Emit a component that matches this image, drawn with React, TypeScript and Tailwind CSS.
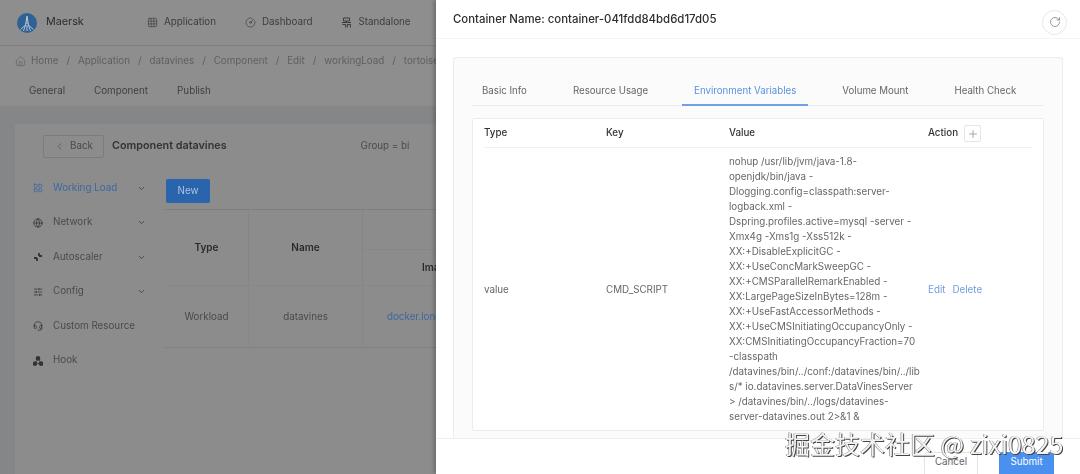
import { ChevronDown, ChevronLeft, CircleGauge, Globe, Grid3x3, Headset, House, LayoutGrid, Plus, RotateCw, SlidersHorizontal } from "lucide-react";
import type { SVGProps } from "react";

const FONT = "font-['Inter','Liberation_Sans',sans-serif]";

const breadcrumbs = ["Home", "Application", "datavines", "Component", "Edit", "workingLoad", "tortoise"];

function ScalerIcon(props: SVGProps<SVGSVGElement> & { size?: number; strokeWidth?: number }) {
  const { size = 10, strokeWidth = 1.4, ...rest } = props;
  return (
    <svg width={size} height={size} viewBox="0 0 10 10" fill="none" stroke="currentColor" strokeWidth={strokeWidth} {...rest}>
      <path d="M1 6h3M4 6v3M6 4h3M6 4V1" />
    </svg>
  );
}

function HookIcon(props: SVGProps<SVGSVGElement> & { size?: number; strokeWidth?: number }) {
  const { size = 10, strokeWidth = 1, ...rest } = props;
  return (
    <svg width={size} height={size} viewBox="0 0 10 10" fill="currentColor" stroke="currentColor" strokeWidth={strokeWidth} {...rest}>
      <circle cx="5" cy="2.4" r="1.4" />
      <circle cx="2" cy="7.6" r="1.4" />
      <circle cx="8" cy="7.6" r="1.4" />
      <path d="M5 2.4 2 7.6h6Z" fill="none" strokeWidth="0.7" />
    </svg>
  );
}

const sideMenu = [
  { label: "Working Load", icon: LayoutGrid, active: true, caret: true },
  { label: "Network", icon: Globe, caret: true },
  { label: "Autoscaler", icon: ScalerIcon, caret: true },
  { label: "Config", icon: SlidersHorizontal, caret: true },
  { label: "Custom Resource", icon: Headset },
  { label: "Hook", icon: HookIcon },
];

const drawerTabs = ["Basic Info", "Resource Usage", "Environment Variables", "Volume Mount", "Health Check"];

const scriptLines = [
  "nohup /usr/lib/jvm/java-1.8-",
  "openjdk/bin/java -",
  "Dlogging.config=classpath:server-",
  "logback.xml -",
  "Dspring.profiles.active=mysql -server -",
  "Xmx4g -Xms1g -Xss512k -",
  "XX:+DisableExplicitGC -",
  "XX:+UseConcMarkSweepGC -",
  "XX:+CMSParallelRemarkEnabled -",
  "XX:LargePageSizeInBytes=128m -",
  "XX:+UseFastAccessorMethods -",
  "XX:+UseCMSInitiatingOccupancyOnly -",
  "XX:CMSInitiatingOccupancyFraction=70",
  "-classpath",
  "/datavines/bin/../conf:/datavines/bin/../lib",
  "s/* io.datavines.server.DataVinesServer",
  "> /datavines/bin/../logs/datavines-",
  "server-datavines.out 2>&1 &",
];

function Logo() {
  return (
    <svg width="20" height="20" viewBox="0 0 20 20" className="shrink-0">
      <circle cx="10" cy="10" r="10" fill="#2f6096" />
      <path d="M10 3 L8.6 12 M10 3 L11.4 12 M8.9 7h2.2M8.6 10h2.8M8.6 12 L3.5 16.5 M11.4 12 L16.5 16.5 M10 12v6 M8.6 12 L6.5 18 M11.4 12 L13.5 18" stroke="#c4ced8" strokeWidth="0.9" fill="none" />
    </svg>
  );
}

function StandaloneIcon() {
  return (
    <svg width="11" height="11" viewBox="0 0 11 11" fill="none" stroke="currentColor" strokeWidth="1" className="shrink-0">
      <path d="M2.5 1h6v3h-6ZM1 5.5h9M1.5 7.5h3.2v3M6.3 10.5v-3h3.2v3M5.5 4v1.5" />
    </svg>
  );
}

function TopNav() {
  const items = [
    { label: "Application", icon: <Grid3x3 size={11} strokeWidth={1.4} className="shrink-0" /> },
    { label: "Dashboard", icon: <CircleGauge size={11} strokeWidth={1.4} className="shrink-0" /> },
    { label: "Standalone", icon: <StandaloneIcon /> },
  ];
  return (
    <div className="flex h-[46px] shrink-0 items-center border-b border-[#808080] bg-[#8e8e8e] pl-[17px]">
      <Logo />
      <span className="ml-[9px] w-[101px] text-[10.8px] text-[#2b2b2b]">Maersk</span>
      <div className="flex gap-[29px]">
        {items.map(({ label, icon }) => (
          <div key={label} className="flex items-center gap-[6px] text-[9.8px] text-[#3d3d3d]">
            {icon}
            {label}
          </div>
        ))}
      </div>
    </div>
  );
}

function SubHeader() {
  return (
    <div className="shrink-0 bg-[#8e8e8e]">
      <div className="flex h-[30px] items-center whitespace-nowrap pl-[15px] pt-[1px] text-[9.8px] text-[#5f5f5f]">
        <House size={11} strokeWidth={1.4} className="mr-[5px] shrink-0" />
        {breadcrumbs.map((crumb, i) => (
          <span key={crumb} className="flex items-center">
            {i > 0 && <span className="mx-[8px]">/</span>}
            {crumb}
          </span>
        ))}
      </div>
      <div className="flex h-[30px] items-center gap-[29px] pl-[29px] text-[9.8px] text-[#3f3f3f]">
        <span>General</span>
        <span>Component</span>
        <span>Publish</span>
      </div>
    </div>
  );
}

function SideMenu() {
  return (
    <div className="flex w-[150px] shrink-0 flex-col pl-[18px] pt-[47px]">
      {sideMenu.map(({ label, icon: Icon, active, caret }) => (
        <div
          key={label}
          className={`flex h-[34.5px] items-center text-[9.8px] ${active ? "text-[#3f67a0]" : "text-[#4a4a4a]"}`}
        >
          <span className={`flex w-[10px] shrink-0 justify-center ${active ? "text-[#3f67a0]" : "text-[#333333]"}`}>
            <Icon size={10} strokeWidth={1.8} />
          </span>
          <span className="ml-[10px] whitespace-nowrap">{label}</span>
          {caret && <ChevronDown size={9} strokeWidth={2} className="ml-auto mr-[19px] text-[#333333]" />}
        </div>
      ))}
    </div>
  );
}

function ComponentTable() {
  return (
    <div className="min-w-0 flex-1 pt-[55px]">
      <button className="ml-[1px] flex h-[24px] w-[44px] items-center justify-center rounded-[2px] bg-[#2a64ad] text-[9.8px] text-[#a9c3e3]">
        New
      </button>
      <div className="mt-[6px] border-t border-[#7f7f7f]">
        <div className="flex h-[76px] border-b border-[#878787] text-[10px] font-semibold text-[#2a2a2a]">
          <div className="flex w-[84px] shrink-0 items-center justify-center border-r border-[#858585]">Type</div>
          <div className="flex w-[114px] shrink-0 items-center justify-center border-r border-[#858585]">Name</div>
          <div className="min-w-0 flex-1">
            <div className="h-[40px] border-b border-[#878787]" />
            <div className="whitespace-nowrap pl-[59px] pt-[10px]">Image</div>
          </div>
        </div>
        <div className="flex h-[62px] border-b border-[#808080] pt-[1px] text-[9.8px] text-[#4a4a4a]">
          <div className="flex w-[84px] shrink-0 items-center justify-center border-r border-[#878787]">Workload</div>
          <div className="flex w-[114px] shrink-0 items-center justify-center border-r border-[#878787]">datavines</div>
          <div className="flex min-w-0 flex-1 items-center overflow-hidden whitespace-nowrap pl-[24px] text-[#3f67a0]">docker.long</div>
        </div>
      </div>
    </div>
  );
}

function Background() {
  return (
    <div className="flex h-full w-[436px] shrink-0 flex-col overflow-hidden bg-[#858688] blur-[0.5px]">
      <TopNav />
      <SubHeader />
      <div className="mt-[18px] ml-[15px] flex-1 overflow-hidden bg-[#8c8c8c]">
        <div className="flex h-[44px] w-[421px] items-center pl-[28px]">
          <div className="flex h-[23px] w-[61px] items-center justify-center gap-[5px] rounded-[2px] border border-[#7c7c7c] text-[9.8px] text-[#4a4a4a]">
            <ChevronLeft size={11} strokeWidth={1.5} />
            Back
          </div>
          <span className="ml-[8px] whitespace-nowrap text-[10.8px] font-semibold text-[#333333]">Component datavines</span>
          <span className="ml-[134px] whitespace-nowrap text-[9.8px] text-[#4a4a4a]">Group = bi</span>
        </div>
        <div className="-mt-[44px] flex w-[421px]">
          <SideMenu />
          <ComponentTable />
        </div>
      </div>
    </div>
  );
}

function EnvTable() {
  return (
    <div className="mx-[18px] mt-[12px] h-[313px] rounded-[2px] border border-[#ececec] bg-white px-[11px]">
      <div className="flex h-[29px] items-center border-b border-[#f0f0f0] pt-[1px] text-[9.8px] font-medium text-[#333333]">
        <span className="w-[122px]">Type</span>
        <span className="w-[123px]">Key</span>
        <span className="w-[199px]">Value</span>
        <span className="flex items-center gap-[6px]">
          Action
          <span className="flex h-[17px] w-[17px] items-center justify-center rounded-[2px] border border-[#e5e5e5] text-[#777777]">
            <Plus size={12} strokeWidth={1.2} />
          </span>
        </span>
      </div>
      <div className="flex items-center pt-[6px] text-[9.8px] leading-[15px] text-[#666666]">
        <span className="w-[122px]">value</span>
        <span className="w-[123px]">CMD_SCRIPT</span>
        <div className="w-[199px] whitespace-nowrap">
          {scriptLines.map((line) => (
            <div key={line}>{line}</div>
          ))}
        </div>
        <span className="flex gap-[7px] text-[#6f9fdc]">
          <span>Edit</span>
          <span>Delete</span>
        </span>
      </div>
    </div>
  );
}

function Drawer() {
  return (
    <div className="flex h-full w-[644px] shrink-0 flex-col bg-white shadow-[-2px_0_4px_rgba(0,0,0,0.25)] blur-[0.3px]">
      <div className="flex h-[39px] shrink-0 items-center justify-between border-b border-[#f3f3f3] pl-[17px] pr-[13px]">
        <span className="pt-[1px] text-[11.4px] font-medium text-[#2e2e2e]">Container Name: container-041fdd84bd6d17d05</span>
        <span className="mt-[6px] flex h-[25px] w-[25px] items-center justify-center rounded-full border border-[#e8e8e8] text-[#666666]">
          <RotateCw size={12} strokeWidth={1.3} />
        </span>
      </div>
      <div className="h-[399px] shrink-0 px-[17px] pt-[18px]">
        <div className="h-[381px] w-[610px] overflow-hidden rounded-t-[3px] border border-b-0 border-[#ececec] bg-[#fbfbfb] pt-[19px]">
          <div className="mx-[18px] h-[29px] border-b border-[#ececec] text-[9.7px] text-[#666666]">
            <div className="-ml-[2px] flex h-[29px] gap-[22px]">
              {drawerTabs.map((tab, i) => (
                <span
                  key={tab}
                  className={`flex items-center whitespace-nowrap border-b-2 px-[12px] pt-[2px] ${
                    i === 2 ? "border-[#6ea2e6] text-[#5a93de]" : "border-transparent"
                  }`}
                >
                  {tab}
                </span>
              ))}
            </div>
          </div>
          <EnvTable />
        </div>
      </div>
      <div className="flex flex-1 justify-end gap-[21px] border-t border-[#f0f0f0] bg-white pr-[26px] pt-[13px]">
        <button className="h-[30px] w-[54px] rounded-[3px] border border-[#e3e3e3] pb-[9px] text-[9.8px] text-[#666666]">
          Cancel
        </button>
        <button className="h-[30px] w-[55px] rounded-[3px] bg-[#4a90ee] pb-[9px] text-[9.8px] text-white">
          Submit
        </button>
      </div>
    </div>
  );
}

export default function App() {
  return (
    <div className={`relative flex h-[474px] w-[1080px] overflow-hidden ${FONT}`}>
      <Background />
      <Drawer />
      <div className="absolute left-[785px] top-[427px] z-20 whitespace-nowrap font-['Noto_Sans_CJK_SC','Liberation_Sans',sans-serif] text-[25px] leading-[32px] text-[#f4f4f4] [text-shadow:1px_1px_0_#444444,-0.5px_-0.5px_0_#666666]">
        掘金技术社区 @ zixi0825
      </div>
    </div>
  );
}
